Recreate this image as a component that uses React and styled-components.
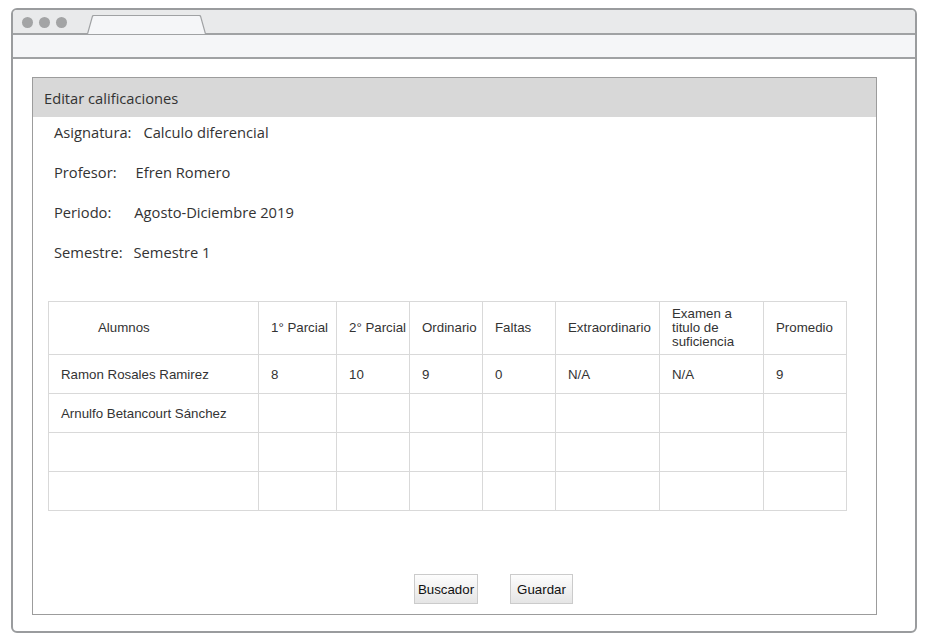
import React from 'react'
import styled, { createGlobalStyle } from 'styled-components'

const GlobalStyle = createGlobalStyle`
  body {
    margin: 0;
    background: #fff;
    font-family: 'Open Sans', sans-serif;
  }
`
const Frame = styled.div`
  background: #fff;
  border: 2px solid #9a9c9e;
  border-radius: 6px;
  box-sizing: border-box;
  display: flex;
  flex-direction: column;
  height: 625px;
  margin: 8px 0 0 11px;
  overflow: hidden;
  width: 906px;
`
const TitleBar = styled.div`
  align-items: flex-end;
  background: #e9eaeb;
  border-bottom: 2px solid #a0a2a4;
  display: flex;
  height: 23px;
  padding-left: 9px;
`
const Dots = styled.div`
  align-self: center;
  display: flex;
  gap: 6px;
  margin-top: 2px;
`
const Dot = styled.span`
  background: #a3a4a5;
  border-radius: 50%;
  height: 11px;
  width: 11px;
`
const Tab = styled.svg`
  display: block;
  margin-left: 20px;
  margin-bottom: -1px;
`
const AddressBar = styled.div`
  background: #f5f6f8;
  border-bottom: 2px solid #a0a2a4;
  height: 22px;
`
const Content = styled.div`
  flex: 1;
  padding: 18px 0 0 19px;
`
const Panel = styled.div`
  border: 1px solid #9c9c9c;
  box-sizing: border-box;
  display: flex;
  flex-direction: column;
  height: 538px;
  width: 845px;
`
const PanelHeader = styled.div`
  align-items: center;
  background: #d8d8d8;
  color: #333;
  display: flex;
  font-size: 14.7px;
  height: 39px;
  padding-left: 11px;
`
const InfoList = styled.div`
  display: flex;
  flex-direction: column;
  gap: 20px;
  padding: 5px 0 0 21px;
`
const InfoRow = styled.div`
  color: #333;
  display: flex;
  font-size: 14.7px;
  height: 20px;
  line-height: 20px;
`
const InfoValue = styled.span`
  margin-left: ${props => props.gap}px;
`
const Table = styled.table`
  border-collapse: collapse;
  color: #333;
  font-family: 'Liberation Sans', Arial, sans-serif;
  font-size: 13.3px;
  margin: 39px 0 0 15px;
  table-layout: fixed;
  width: 798px;
`
const HeadCell = styled.th`
  border: 1px solid #d9d9d9;
  font-weight: normal;
  height: 52px;
  line-height: 14px;
  padding: 0 ${props => props.wrap ? 12 : 0}px 0 ${props => props.indent || 12}px;
  text-align: left;
  vertical-align: middle;
  white-space: ${props => props.wrap ? 'normal' : 'nowrap'};
`
const Cell = styled.td`
  border: 1px solid #d9d9d9;
  height: 38px;
  padding: 0 12px;
  vertical-align: middle;
  white-space: nowrap;
`
const Actions = styled.div`
  display: flex;
  gap: 32px;
  margin-top: 63px;
  padding-left: 381px;
`
const Button = styled.button`
  background: linear-gradient(#fdfdfd, #e5e5e5);
  border: 1px solid #cbcbcb;
  color: #111;
  font-family: 'Liberation Sans', Arial, sans-serif;
  font-size: 13.3px;
  height: 30px;
  padding: 0;
  width: ${props => props.w}px;
`

const info = [
  { label: 'Asignatura:', value: 'Calculo diferencial', gap: 12 },
  { label: 'Profesor:', value: 'Efren Romero', gap: 19 },
  { label: 'Periodo:', value: 'Agosto-Diciembre 2019', gap: 23 },
  { label: 'Semestre:', value: 'Semestre 1', gap: 11 }
]

const columns = [210, 78, 73, 73, 73, 104, 104, 83]
const headers = ['1° Parcial', '2° Parcial', 'Ordinario', 'Faltas', 'Extraordinario', 'Examen a titulo de suficiencia', 'Promedio']

const rows = [
  ['Ramon Rosales Ramirez', '8', '10', '9', '0', 'N/A', 'N/A', '9'],
  ['Arnulfo Betancourt Sánchez', '', '', '', '', '', '', ''],
  ['', '', '', '', '', '', '', ''],
  ['', '', '', '', '', '', '', '']
]

function App () {
  return (
    <>
      <GlobalStyle />
      <Frame>
        <TitleBar>
          <Dots>
            <Dot />
            <Dot />
            <Dot />
          </Dots>
          <Tab width='120' height='19' viewBox='0 0 120 19'>
            <path d='M0.5 19 L5.5 1 Q6 0.5 7 0.5 L112 0.5 Q113 0.5 113.5 1 L118.5 19' fill='#f5f6f8' stroke='#a0a2a4' strokeWidth='1.2' />
          </Tab>
        </TitleBar>
        <AddressBar />
        <Content>
          <Panel>
            <PanelHeader>Editar calificaciones</PanelHeader>
            <InfoList>
              {info.map(item => (
                <InfoRow key={item.label}>
                  <span>{item.label}</span>
                  <InfoValue gap={item.gap}>{item.value}</InfoValue>
                </InfoRow>
              ))}
            </InfoList>
            <Table>
              <colgroup>
                {columns.map((w, i) => <col key={i} style={{ width: w }} />)}
              </colgroup>
              <thead>
                <tr>
                  <HeadCell indent={49}>Alumnos</HeadCell>
                  {headers.map(h => (
                    <HeadCell key={h} wrap={h.length > 20}>{h}</HeadCell>
                  ))}
                </tr>
              </thead>
              <tbody>
                {rows.map((row, r) => (
                  <tr key={r}>
                    {row.map((value, c) => <Cell key={c}>{value}</Cell>)}
                  </tr>
                ))}
              </tbody>
            </Table>
            <Actions>
              <Button w={64}>Buscador</Button>
              <Button w={63}>Guardar</Button>
            </Actions>
          </Panel>
        </Content>
      </Frame>
    </>
  )
}

export default App
